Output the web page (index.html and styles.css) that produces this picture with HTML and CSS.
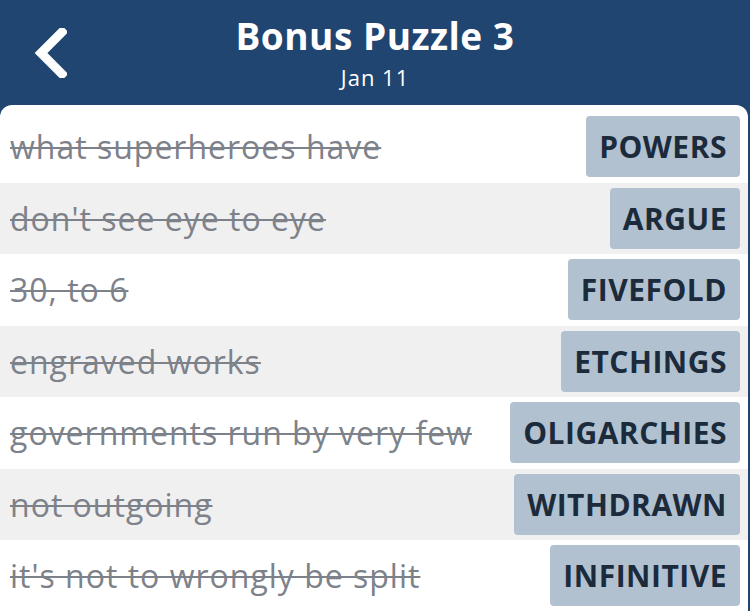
FILE: index.html
```html
<!DOCTYPE html>
<html lang="en">
<head>
  <meta charset="UTF-8" />
  <title>Bonus Puzzle 3</title>
  <meta name="viewport" content="width=device-width, initial-scale=1.0" />
  <link rel="stylesheet" href="styles.css">
</head>
<body>
  <div id="app">
    <header class="topbar">
      <button class="back" aria-label="Back">
        <svg width="34" height="50" viewBox="0 0 34 50">
          <path d="M29 4 L8 25 L29 46" fill="none" stroke="#fff" stroke-width="9" stroke-linecap="square" />
        </svg>
      </button>
      <div class="title">
        <h1>Bonus Puzzle 3</h1>
        <div class="date">Jan 11</div>
      </div>
    </header>

    <ul class="clues">
      <li class="clue"><span class="text">what superheroes have</span><span class="answer">POWERS</span></li>
      <li class="clue"><span class="text">don't see eye to eye</span><span class="answer">ARGUE</span></li>
      <li class="clue"><span class="text">30, to 6</span><span class="answer">FIVEFOLD</span></li>
      <li class="clue"><span class="text">engraved works</span><span class="answer">ETCHINGS</span></li>
      <li class="clue"><span class="text">governments run by very few</span><span class="answer">OLIGARCHIES</span></li>
      <li class="clue"><span class="text">not outgoing</span><span class="answer">WITHDRAWN</span></li>
      <li class="clue"><span class="text">it's not to wrongly be split</span><span class="answer">INFINITIVE</span></li>
    </ul>
  </div>
</body>
</html>
```

FILE: styles.css
```css
body {
  margin: 0;
  background: #1f4570;
  font-family: "Open Sans", sans-serif;
  overflow: hidden;
}

#app {
  width: 750px;
  height: 611px;
}

.topbar {
  position: relative;
  height: 105px;
  color: white;
  text-align: center;
}

.back {
  position: absolute;
  left: 33px;
  top: 28px;
  padding: 0;
  background: none;
  border: none;
}

.title {
  padding-top: 14px;
}

.title h1 {
  margin: 0;
  font-size: 37px;
  font-weight: 700;
  line-height: 44px;
  letter-spacing: 0.5px;
}

.date {
  font-size: 22px;
  line-height: 28px;
  margin-top: 5px;
  letter-spacing: 1px;
}

.clues {
  list-style: none;
  margin: 0 2px 0 0;
  padding: 6px 0 0;
  background: white;
  border-radius: 12px 12px 0 0;
  height: 506px;
}

.clue {
  display: flex;
  align-items: center;
  justify-content: space-between;
  height: 71.5px;
  padding: 0 8px 0 10px;
  box-sizing: border-box;
}

.clue:nth-child(even) {
  background: #f0f0f0;
}

.text {
  font-size: 32px;
  letter-spacing: 1px;
  color: #7d828a;
  text-decoration: line-through;
  text-decoration-thickness: 2px;
  white-space: nowrap;
}

.answer {
  height: 61px;
  line-height: 61px;
  padding: 0 13px;
  background: #b1c1cf;
  border-radius: 4px;
  color: #1c2b3b;
  font-size: 30px;
  font-weight: 700;
  letter-spacing: 0.5px;
}
```
